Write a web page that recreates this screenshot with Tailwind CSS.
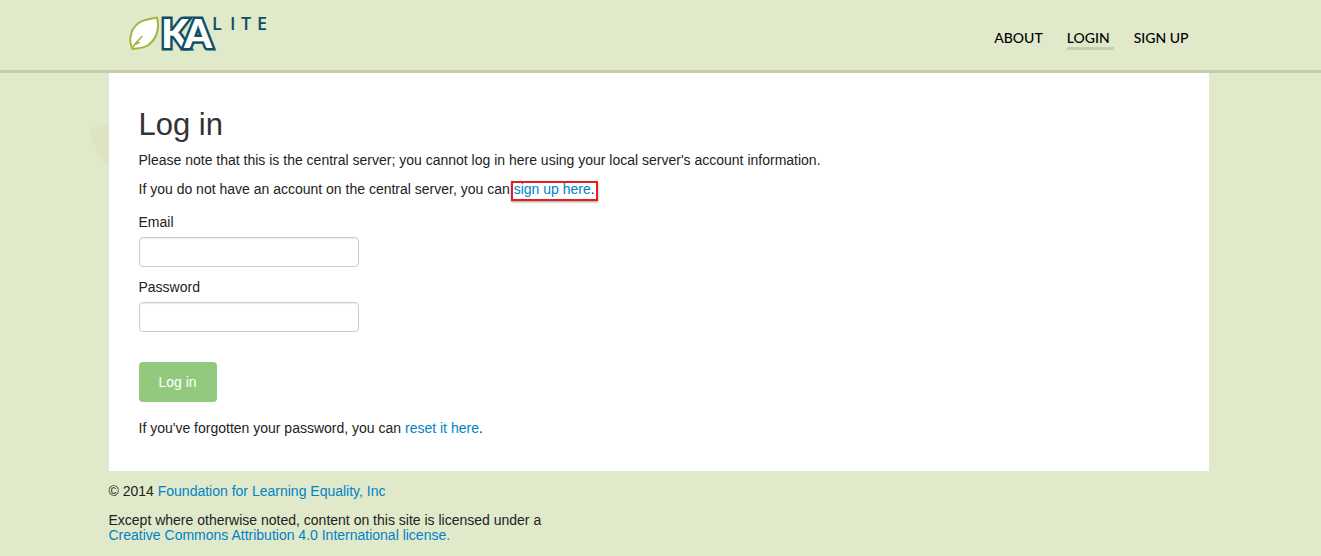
<!DOCTYPE html>
<html lang="en">
<head>
<meta charset="utf-8">
<meta name="viewport" content="width=device-width, initial-scale=1">
<title>Log in | KA Lite</title>
<script src="https://cdn.jsdelivr.net/npm/@tailwindcss/browser@4"></script>
</head>
<body class="min-h-screen overflow-x-hidden bg-[#e0e9ca] font-['Liberation_Sans',Arial,sans-serif] text-sm leading-5 text-[#222]">
<header class="border-b-3 border-[#c6cfaa] pr-1">
  <div class="mx-auto flex h-[70px] max-w-[1100px] items-start justify-between px-5">
    <a href="#" aria-label="KA Lite home" class="pt-3">
      <svg width="144" height="48" viewBox="0 -4 144 48" class="overflow-visible">
        <path d="M4 33C-1 26 1 14 9 7.500C14.500 3 22 3 28 1.500C30.500 11 28.500 22 20 28.500C14 33 8 32 4 33Z" fill="#fff" stroke="#a1b83f" stroke-width="2" stroke-linejoin="round"/>
        <path d="M3 33C5 28 9 25 13 20.500M6 28.500L10 26.500" fill="none" stroke="#a1b83f" stroke-width="1.500" stroke-linecap="round"/>
        <text x="32 55" y="32" font-family="Lato, sans-serif" font-size="40" font-weight="900" fill="#fff" stroke="#0f4f66" stroke-width="5" paint-order="stroke">KA</text>
        <text x="83 101 112 128" y="14" font-family="'Open Sans', sans-serif" font-size="18" font-weight="600" fill="#0f4f66">LITE</text>
      </svg>
    </a>
    <nav class="flex gap-5 pt-7 font-['Lato',sans-serif] font-medium text-black">
      <a href="#" class="pr-1">ABOUT</a>
      <a href="#" class="h-[22px] border-b-3 border-[#c6cfaa] pr-1">LOGIN</a>
      <a href="#">SIGN UP</a>
    </nav>
  </div>
</header>
<div class="pr-1">
  <div class="relative mx-auto max-w-[1100px]">
    <svg class="absolute top-[50px] -left-5" width="20" height="44" viewBox="0 0 20 44" aria-hidden="true"><path d="M1 6Q10 1 20 0V44Q5 30 1 6Z" fill="#dde4c3"/></svg>
    <main class="relative bg-white px-[30px] pt-8 pb-[33px]">
      <h1 class="mb-[5px] text-[31px] leading-10 text-[#333]">Log in</h1>
      <p class="mb-[9px]">Please note that this is the central server; you cannot log in here using your local server's account information.</p>
      <p class="mb-[13px]">If you do not have an account on the central server, you can <span class="relative"><a href="#" class="text-[#0082c8]">sign up here</a>.<span class="absolute -inset-x-[3px] top-0 -bottom-1 border-2 border-[#e3201b] shadow-[0_1px_2px_#0006]"></span></span></p>
      <form>
        <label for="email" class="mb-[5px] block">Email</label>
        <input id="email" type="email" class="mb-[10px] block h-[30px] w-[220px] rounded border border-[#ccc] bg-white px-2 shadow-[inset_0_1px_1px_#00000013]">
        <label for="password" class="mb-[5px] block">Password</label>
        <input id="password" type="password" class="block h-[30px] w-[220px] rounded border border-[#ccc] bg-white px-2 shadow-[inset_0_1px_1px_#00000013]">
        <button type="submit" class="mt-[30px] mb-4 block h-10 w-[78px] rounded bg-[#92c97f] text-white">Log in</button>
      </form>
      <p>If you've forgotten your password, you can <a href="#" class="text-[#0082c8]">reset it here</a>.</p>
    </main>
    <footer class="pt-[10px] leading-[15px]">
      <p class="mb-[14px] pt-[3px]">© 2014 <a href="#" class="text-[#0082c8]">Foundation for Learning Equality, Inc</a></p>
      <p>Except where otherwise noted, content on this site is licensed under a<br><a href="#" class="text-[#0082c8]">Creative Commons Attribution 4.0 International license.</a></p>
    </footer>
  </div>
</div>
</body>
</html>
